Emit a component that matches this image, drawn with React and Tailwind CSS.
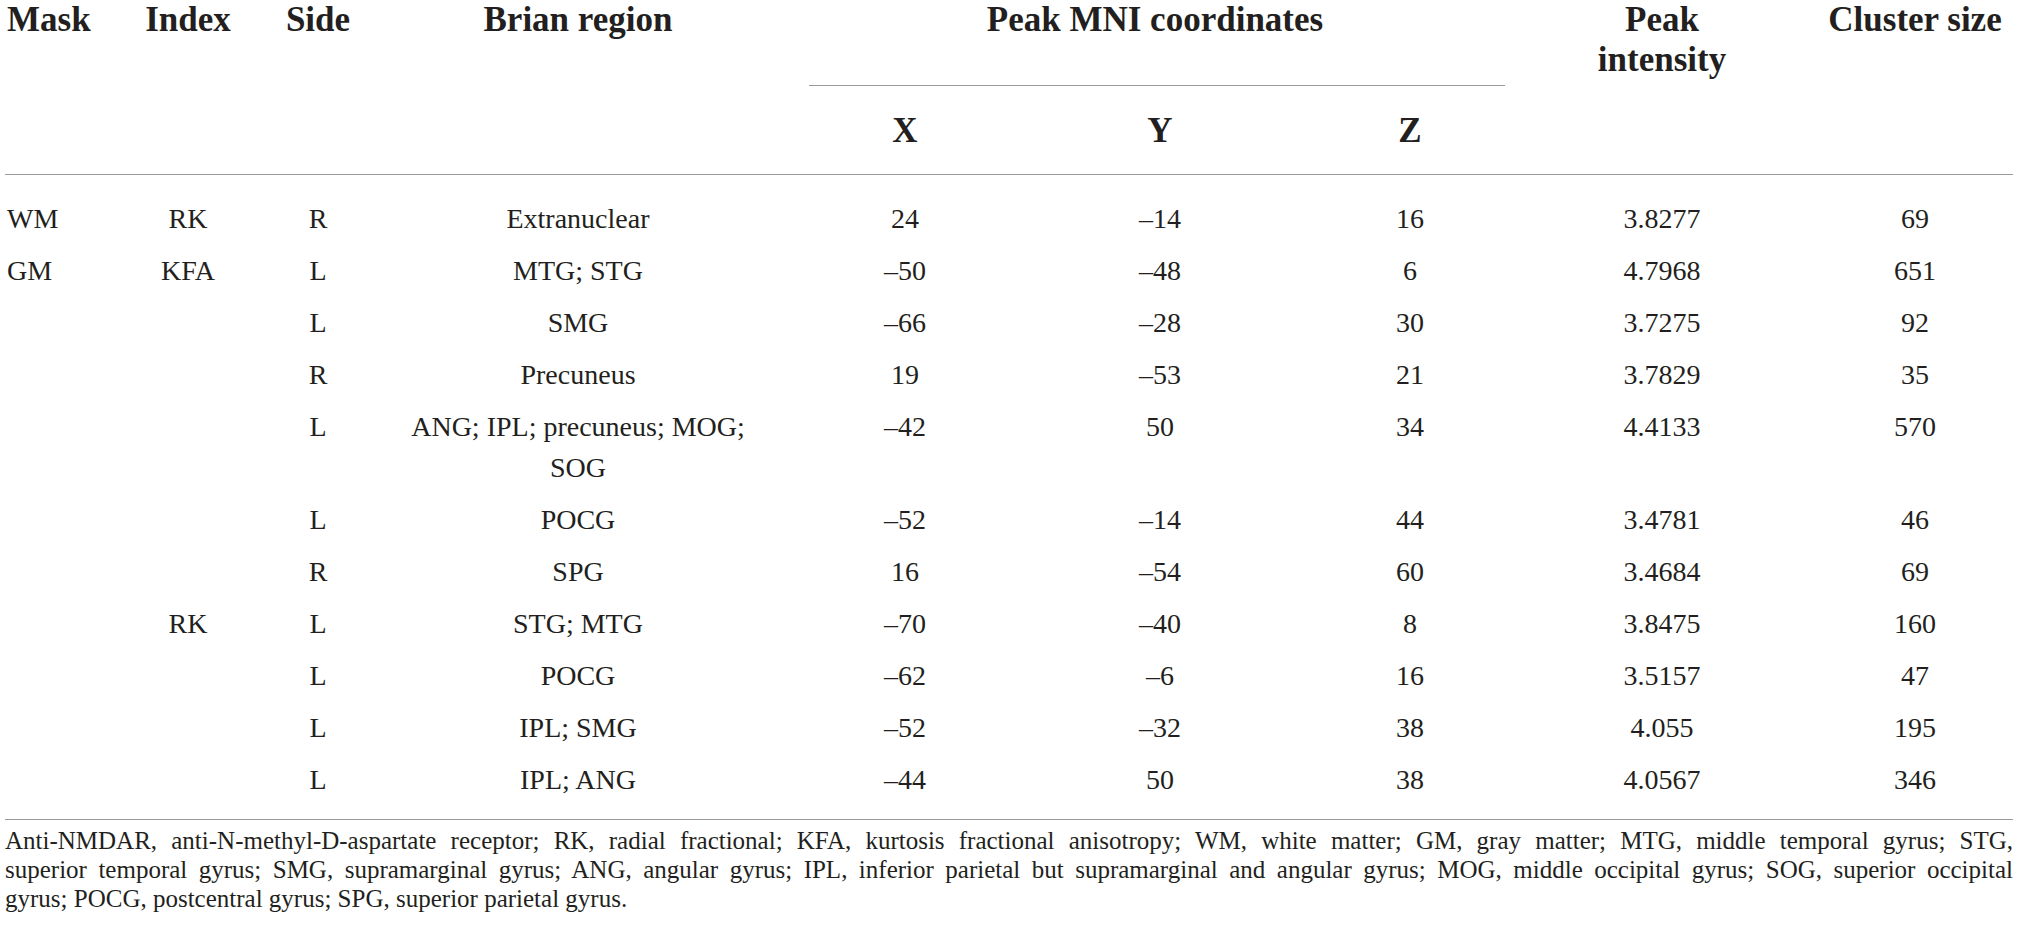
import React from 'react';

const cols = 'grid grid-cols-[105px_156px_104px_416px_238px_272px_228px_276px_213px]';

const rows = [
  ['WM', 'RK', 'R', 'Extranuclear', '24', '–14', '16', '3.8277', '69'],
  ['GM', 'KFA', 'L', 'MTG; STG', '–50', '–48', '6', '4.7968', '651'],
  ['', '', 'L', 'SMG', '–66', '–28', '30', '3.7275', '92'],
  ['', '', 'R', 'Precuneus', '19', '–53', '21', '3.7829', '35'],
  ['', '', 'L', 'ANG; IPL; precuneus; MOG;|SOG', '–42', '50', '34', '4.4133', '570'],
  ['', '', 'L', 'POCG', '–52', '–14', '44', '3.4781', '46'],
  ['', '', 'R', 'SPG', '16', '–54', '60', '3.4684', '69'],
  ['', 'RK', 'L', 'STG; MTG', '–70', '–40', '8', '3.8475', '160'],
  ['', '', 'L', 'POCG', '–62', '–6', '16', '3.5157', '47'],
  ['', '', 'L', 'IPL; SMG', '–52', '–32', '38', '4.055', '195'],
  ['', '', 'L', 'IPL; ANG', '–44', '50', '38', '4.0567', '346'],
];

const App = () => {
  return (
    <div className="min-h-screen bg-white text-[#231f20] font-['Liberation_Serif',serif]">
      <div className="w-[2008px] ml-[5px]">
        {/* Header */}
        <div className={`${cols} grid-rows-[86px_88px] border-b border-[#9a9a9a] text-[35px] font-bold leading-[40px]`}>
          <div className="row-span-2 pl-[2px]">Mask</div>
          <div className="row-span-2 text-center">Index</div>
          <div className="row-span-2 text-center">Side</div>
          <div className="row-span-2 text-center">Brian region</div>
          <div className="col-span-3 flex flex-col justify-between">
            <div className="text-center">Peak MNI coordinates</div>
            <div className="h-px bg-[#9a9a9a] ml-[23px] mr-[19px]"></div>
          </div>
          <div className="row-span-2 text-center">
            Peak
            <br />
            intensity
          </div>
          <div className="row-span-2 text-center pl-[17px]">Cluster size</div>
          <div className="pt-[25px] text-center">X</div>
          <div className="pt-[25px] text-center">Y</div>
          <div className="pt-[25px] text-center">Z</div>
        </div>

        {/* Body */}
        <div className="pt-[18px] pb-[13px] border-b border-[#9a9a9a] text-[28px] leading-[41px]">
          {rows.map((r, i) => (
            <div key={i} className={`${cols} pt-[5px] pb-[6px]`}>
              <div className="pl-[2px]">{r[0]}</div>
              <div className="text-center">{r[1]}</div>
              <div className="text-center">{r[2]}</div>
              <div className="text-center">
                {r[3].split('|').map((t, j) => (
                  <div key={j}>{t}</div>
                ))}
              </div>
              <div className="text-center">{r[4]}</div>
              <div className="text-center">{r[5]}</div>
              <div className="text-center">{r[6]}</div>
              <div className="text-center">{r[7]}</div>
              <div className="text-center pl-[17px]">{r[8]}</div>
            </div>
          ))}
        </div>

        {/* Footnote */}
        <div className="pt-[6px] text-[25px] leading-[29px] whitespace-nowrap">
          <div className="text-justify [text-align-last:justify]">
            Anti-NMDAR, anti-N-methyl-D-aspartate receptor; RK, radial fractional; KFA, kurtosis fractional anisotropy; WM, white matter; GM, gray matter; MTG, middle temporal gyrus; STG,
          </div>
          <div className="text-justify [text-align-last:justify]">
            superior temporal gyrus; SMG, supramarginal gyrus; ANG, angular gyrus; IPL, inferior parietal but supramarginal and angular gyrus; MOG, middle occipital gyrus; SOG, superior occipital
          </div>
          <div>gyrus; POCG, postcentral gyrus; SPG, superior parietal gyrus.</div>
        </div>
      </div>
    </div>
  );
};

export default App;
